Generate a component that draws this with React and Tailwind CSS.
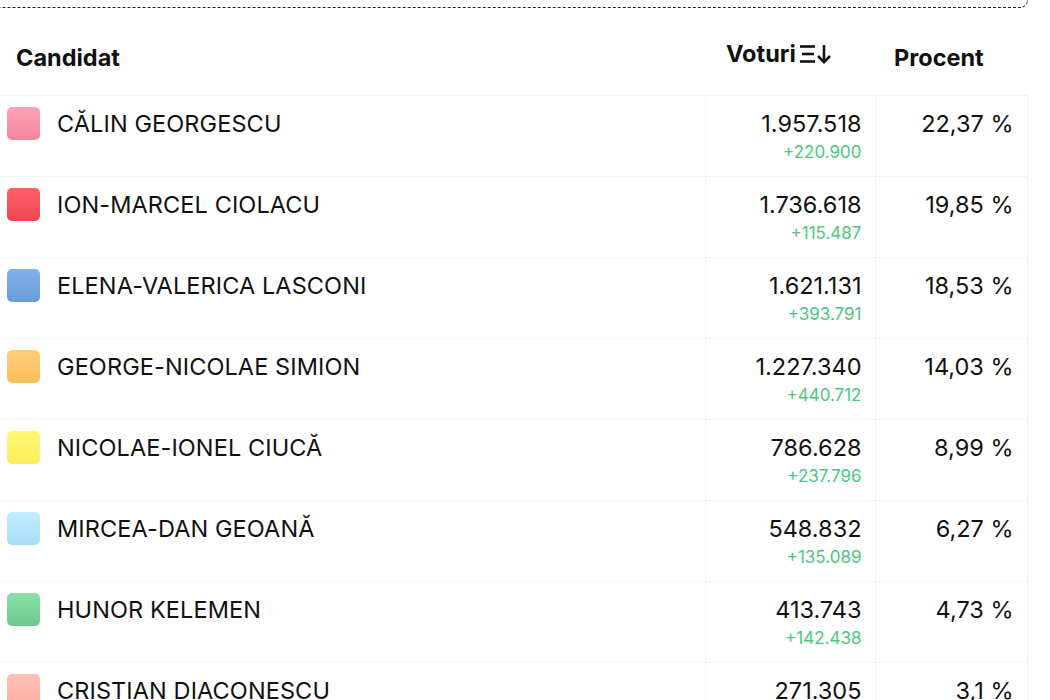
import React from 'react'

const candidati = [
  { nume: 'CĂLIN GEORGESCU', voturi: '1.957.518', delta: '+220.900', procent: '22,37 %', culoare: 'from-[#fba3b6] to-[#f4859d]' },
  { nume: 'ION-MARCEL CIOLACU', voturi: '1.736.618', delta: '+115.487', procent: '19,85 %', culoare: 'from-[#ff616a] to-[#f1454f]' },
  { nume: 'ELENA-VALERICA LASCONI', voturi: '1.621.131', delta: '+393.791', procent: '18,53 %', culoare: 'from-[#83b2e9] to-[#6b9bd9]' },
  { nume: 'GEORGE-NICOLAE SIMION', voturi: '1.227.340', delta: '+440.712', procent: '14,03 %', culoare: 'from-[#ffcd77] to-[#fdbc5f]' },
  { nume: 'NICOLAE-IONEL CIUCĂ', voturi: '786.628', delta: '+237.796', procent: '8,99 %', culoare: 'from-[#fff873] to-[#fbee5a]' },
  { nume: 'MIRCEA-DAN GEOANĂ', voturi: '548.832', delta: '+135.089', procent: '6,27 %', culoare: 'from-[#c2ecff] to-[#a9def8]' },
  { nume: 'HUNOR KELEMEN', voturi: '413.743', delta: '+142.438', procent: '4,73 %', culoare: 'from-[#89e1a7] to-[#6bca8c]' },
  { nume: 'CRISTIAN DIACONESCU', voturi: '271.305', delta: '+61.924', procent: '3,1 %', culoare: 'from-[#ffc2b6] to-[#ffad9f]' },
]

function SortIcon() {
  return (
    <svg width="32" height="24" viewBox="0 0 32 24" fill="none" stroke="#111" strokeWidth="2.6" strokeLinecap="butt">
      <path d="M1 4.5h15" />
      <path d="M3 12h12" />
      <path d="M1 19.5h15" />
      <path d="M25 3v17" />
      <path d="M19 14l6 6.2l6-6.2" strokeLinejoin="miter" />
    </svg>
  )
}

export default function App() {
  return (
    <div className="min-h-screen bg-white text-[#111] font-['Inter','Liberation_Sans',sans-serif]">
      {/* bottom edge of the card above */}
      <div className="-ml-[6px] w-[1034px] h-[8px] border-x border-b border-dashed border-[#222] rounded-b-[10px]"></div>

      <table className="mt-[12px] w-[1027px] border-collapse table-fixed">
        <colgroup>
          <col className="w-[705px]" />
          <col className="w-[170px]" />
          <col className="w-[152px]" />
        </colgroup>
        <thead>
          <tr className="h-[75px] border-b border-[#f3f3f3]">
            <th className="text-left pl-4 text-[23.5px] font-bold">Candidat</th>
            <th className="text-left pl-[21px] text-[23.5px] font-bold">
              <div className="flex items-center gap-[3px] -mt-[7px]">
                Voturi
                <SortIcon />
              </div>
            </th>
            <th className="text-left pl-[19px] text-[23.5px] font-bold">Procent</th>
          </tr>
        </thead>
        <tbody>
          {candidati.map((c) => (
            <tr key={c.nume} className="h-[81px] border-b border-[#f3f3f3] align-top">
              <td className="pt-[10px] pl-[7px]">
                <div className="flex items-center gap-[17px]">
                  <div className={`w-[33px] h-[33px] rounded-[5px] bg-gradient-to-b ${c.culoare}`}></div>
                  <span className="text-[23.5px] tracking-[0.1px]">{c.nume}</span>
                </div>
              </td>
              <td className="pt-[13px] pr-[13px] text-right border-x border-[#f3f3f3]">
                <div className="text-[23.5px] leading-[29px]">{c.voturi}</div>
                <div className="text-[17px] leading-[28px] text-[#4cc77d]">{c.delta}</div>
              </td>
              <td className="pt-[13px] pr-[13px] text-right border-r border-[#f3f3f3]">
                <div className="text-[23.5px] leading-[29px]">{c.procent}</div>
              </td>
            </tr>
          ))}
        </tbody>
      </table>
    </div>
  )
}
